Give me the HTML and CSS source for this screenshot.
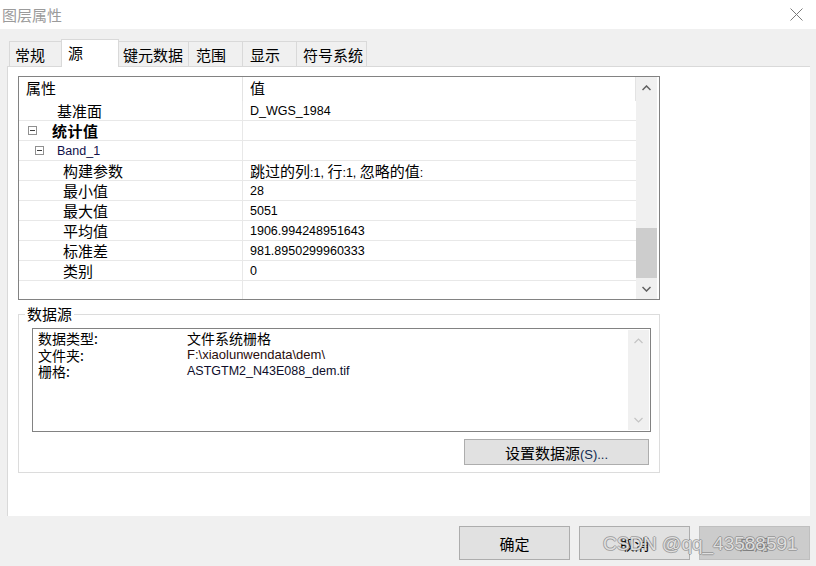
FILE: index.html
```html
<!DOCTYPE html>
<html>
<head>
  <meta charset="utf-8">
  <link rel="stylesheet" href="styles.css">
</head>
<body>
  <div class="window">
    <div class="titlebar">
      <span class="title">图层属性</span>
      <svg class="close" width="13" height="13" viewBox="0 0 13 13">
        <path d="M0.5 0.5L12.5 12.5M12.5 0.5L0.5 12.5" stroke="#7a7a7a" stroke-width="1" fill="none"/>
      </svg>
    </div>

    <div class="tabs">
      <div class="tab tab-general">常规</div>
      <div class="tab tab-source active">源</div>
      <div class="tab tab-meta">键元数据</div>
      <div class="tab tab-extent">范围</div>
      <div class="tab tab-display">显示</div>
      <div class="tab tab-symbol">符号系统</div>
    </div>

    <div class="panel">
      <!-- property grid -->
      <div class="propgrid">
        <div class="grid-main">
          <div class="grid-head">
            <div class="head-name">属性</div>
            <div class="head-val">值</div>
          </div>
          <div class="row">
            <div class="cell-name indent-1">基准面</div>
            <div class="cell-val en">D_WGS_1984</div>
          </div>
          <div class="row">
            <div class="cell-name group"><span class="toggle"></span><b>统计值</b></div>
            <div class="cell-val"></div>
          </div>
          <div class="row">
            <div class="cell-name band"><span class="toggle"></span><span class="en band-name">Band_1</span></div>
            <div class="cell-val"></div>
          </div>
          <div class="row">
            <div class="cell-name indent-2">构建参数</div>
            <div class="cell-val en"><span><span class="zh">跳过的列</span>:1, <span class="zh">行</span>:1, <span class="zh">忽略的值</span>:</span></div>
          </div>
          <div class="row">
            <div class="cell-name indent-2">最小值</div>
            <div class="cell-val en">28</div>
          </div>
          <div class="row">
            <div class="cell-name indent-2">最大值</div>
            <div class="cell-val en">5051</div>
          </div>
          <div class="row">
            <div class="cell-name indent-2">平均值</div>
            <div class="cell-val en">1906.994248951643</div>
          </div>
          <div class="row">
            <div class="cell-name indent-2">标准差</div>
            <div class="cell-val en">981.8950299960333</div>
          </div>
          <div class="row">
            <div class="cell-name indent-2">类别</div>
            <div class="cell-val en">0</div>
          </div>
          <div class="row row-last">
            <div class="cell-name"></div>
            <div class="cell-val"></div>
          </div>
        </div>
        <div class="vscroll">
          <div class="sb-btn">
            <svg width="9" height="6" viewBox="0 0 9 6"><path d="M0.5 5L4.5 1L8.5 5" stroke="#606060" stroke-width="1.5" fill="none"/></svg>
          </div>
          <div class="sb-track"><div class="sb-thumb"></div></div>
          <div class="sb-btn">
            <svg width="9" height="6" viewBox="0 0 9 6"><path d="M0.5 1L4.5 5L8.5 1" stroke="#606060" stroke-width="1.5" fill="none"/></svg>
          </div>
        </div>
      </div>

      <!-- data source -->
      <fieldset class="source">
        <legend>数据源</legend>
        <div class="source-box">
          <div class="source-list">
            <div class="source-row"><span class="source-key">数据类型:</span><span>文件系统栅格</span></div>
            <div class="source-row"><span class="source-key">文件夹:</span><span class="en path">F:\xiaolunwendata\dem\</span></div>
            <div class="source-row"><span class="source-key">栅格:</span><span class="en file">ASTGTM2_N43E088_dem.tif</span></div>
          </div>
          <div class="vscroll vscroll-off">
            <div class="sb-btn">
              <svg width="9" height="6" viewBox="0 0 9 6"><path d="M0.5 5L4.5 1L8.5 5" stroke="#c4c4c4" stroke-width="1.2" fill="none"/></svg>
            </div>
            <div class="sb-track"></div>
            <div class="sb-btn">
              <svg width="9" height="6" viewBox="0 0 9 6"><path d="M0.5 1L4.5 5L8.5 1" stroke="#c4c4c4" stroke-width="1.2" fill="none"/></svg>
            </div>
          </div>
        </div>
        <div class="source-actions">
          <button class="btn btn-wide"><span>设置数据源<span class="en mnemonic">(S)...</span></span></button>
        </div>
      </fieldset>
    </div>

    <div class="footer">
      <button class="btn btn-dlg">确定</button>
      <button class="btn btn-dlg">取消</button>
      <button class="btn btn-dlg disabled">应用</button>
    </div>

    <div class="watermark">CSDN @qq_43588591</div>
  </div>
</body>
</html>
```

FILE: styles.css
```css
/* Base */
* {
  box-sizing: border-box;
}

body {
  margin: 0;
  width: 816px;
  height: 566px;
  overflow: hidden;
  background: #f0f0f0;
  font-family: "Noto Sans CJK SC", sans-serif;
  font-size: 15px;
  color: #000;
}

.en {
  font-family: "Liberation Sans", "Noto Sans CJK SC", sans-serif;
  font-size: 12.5px;
}

.en .zh {
  font-family: "Noto Sans CJK SC", sans-serif;
  font-size: 15px;
}

.window {
  position: relative;
  height: 566px;
  display: flex;
  flex-direction: column;
}

/* Title bar */
.titlebar {
  height: 29px;
  flex: none;
  background: #fff;
  display: flex;
  align-items: center;
  justify-content: space-between;
  padding: 0 13px 0 2px;
}

.title {
  color: #9b9b9b;
  line-height: 1;
}

/* Tabs */
.tabs {
  height: 27px;
  flex: none;
  margin-top: 10px;
  padding-left: 9px;
  display: flex;
  align-items: flex-end;
}

.tab {
  height: 25px;
  margin-left: -1px;
  border: 1px solid #d9d9d9;
  border-bottom: none;
  background: #f0f0f0;
  display: flex;
  align-items: center;
  line-height: 1;
}

.tab:first-child {
  margin-left: 0;
}

.tab.active {
  height: 28px;
  margin-bottom: -1px;
  padding-bottom: 3px;
  background: #fff;
  position: relative;
  z-index: 1;
}

.tab-general { width: 53px; padding-left: 5px; }
.tab-source { width: 58px; padding-left: 6px; }
.tab-meta { width: 71px; padding-left: 4px; }
.tab-extent { width: 55px; padding-left: 7px; }
.tab-display { width: 55px; padding-left: 7px; }
.tab-symbol { width: 71px; padding-left: 6px; }

/* Panel */
.panel {
  flex: none;
  width: 803px;
  height: 450px;
  margin-left: 7px;
  background: #fff;
  border-top: 1px solid #d9d9d9;
  border-left: 1px solid #d9d9d9;
  padding: 9px 0 0 10px;
}

/* Property grid */
.propgrid {
  width: 642px;
  height: 224px;
  border: 1px solid #828282;
  padding-right: 2px;
  display: flex;
}

.grid-main {
  width: 617px;
  display: flex;
  flex-direction: column;
}

.grid-head {
  height: 24px;
  flex: none;
  display: flex;
  align-items: stretch;
}

.head-name {
  width: 224px;
  padding: 0 0 3px 7px;
  border-right: 1px solid #e3e3e3;
  display: flex;
  align-items: center;
}

.head-val {
  flex: 1;
  padding: 0 0 3px 7px;
  border-right: 1px solid #e3e3e3;
  display: flex;
  align-items: center;
}

.row {
  height: 20px;
  flex: none;
  display: flex;
  border-bottom: 1px solid #e8e8e8;
}

.row-last {
  flex: 1;
  border-bottom: none;
}

.cell-name {
  width: 224px;
  flex: none;
  border-right: 1px solid #e8e8e8;
  display: flex;
  align-items: center;
  white-space: nowrap;
}

.cell-val {
  flex: 1;
  padding-left: 7px;
  display: flex;
  align-items: center;
  white-space: nowrap;
}

.indent-1 { padding-left: 38px; }
.indent-2 { padding-left: 44px; }

.group { padding-left: 9px; }
.band { padding-left: 16px; }

.group b {
  font-weight: 700;
  letter-spacing: 0.5px;
}

.toggle {
  width: 9px;
  height: 9px;
  border: 1px solid #909090;
  display: flex;
  align-items: center;
  justify-content: center;
  margin-right: 15px;
}

.band .toggle {
  margin-right: 13px;
}

.toggle::before {
  content: '';
  width: 5px;
  height: 1px;
  background: #404040;
}

.band-name {
  color: #10104a;
}

/* Scrollbars */
.vscroll {
  width: 21px;
  flex: none;
  background: #f0f0f0;
  display: flex;
  flex-direction: column;
}

.sb-btn {
  height: 21px;
  flex: none;
  display: flex;
  align-items: center;
  justify-content: center;
}

.sb-track {
  flex: 1;
  display: flex;
  flex-direction: column;
  justify-content: flex-end;
}

.sb-thumb {
  height: 50px;
  background: #cdcdcd;
}

.vscroll-off {
  margin: 1px;
}

/* Data source */
.source {
  width: 642px;
  height: 168px;
  margin: 5px 0 0;
  padding: 0;
  border: 1px solid #dcdcdc;
}

.source legend {
  margin-left: 6px;
  padding: 0 2px;
  line-height: 18px;
}

.source-box {
  width: 619px;
  height: 104px;
  margin: 5px 0 0 13px;
  border: 1px solid #828282;
  display: flex;
}

.source-list {
  flex: 1;
  padding: 1px 0 0 5px;
  font-size: 14px;
}

.source-row {
  height: 16.5px;
  line-height: 16px;
  display: flex;
  align-items: center;
  white-space: nowrap;
}

.source-key {
  width: 149px;
  flex: none;
}

.path {
  font-size: 13px;
  color: #2a0d0d;
}

.file {
  color: #0d0d2a;
}

.source-actions {
  display: flex;
  justify-content: flex-end;
  margin-top: 7px;
  padding-right: 10px;
}

/* Buttons */
.btn {
  font-family: "Noto Sans CJK SC", sans-serif;
  font-size: 15px;
  color: #000;
  background: #e1e1e1;
  border: 1px solid #adadad;
  padding: 0;
  display: flex;
  align-items: center;
  justify-content: center;
}

.btn-wide {
  width: 185px;
  height: 26px;
}

.mnemonic {
  font-size: 13px;
  color: #102a50;
}

.footer {
  flex: none;
  margin-top: 10px;
  padding-right: 6px;
  display: flex;
  justify-content: flex-end;
  gap: 9px;
}

.btn-dlg {
  width: 111px;
  height: 34px;
}

.btn-dlg.disabled {
  background: #cccccc;
  border-color: #bfbfbf;
  color: #838383;
}

/* Watermark overlay */
.watermark {
  position: absolute;
  left: 603px;
  top: 533px;
  font-family: "Liberation Sans", sans-serif;
  font-size: 19px;
  color: rgba(240, 240, 240, 0.85);
  text-shadow: 1px 0 rgba(120, 120, 120, 0.55), -1px 0 rgba(120, 120, 120, 0.55),
    0 1px rgba(120, 120, 120, 0.55), 0 -1px rgba(120, 120, 120, 0.55);
  pointer-events: none;
}
```
